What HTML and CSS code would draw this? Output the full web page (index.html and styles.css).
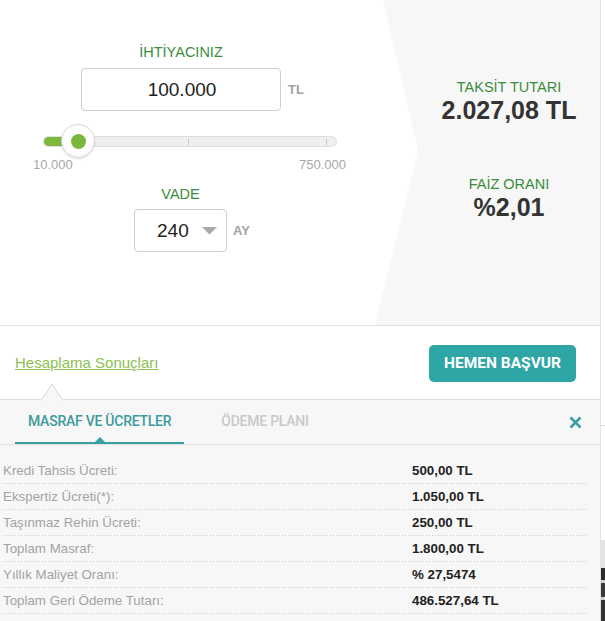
FILE: index.html
```html
<!DOCTYPE html>
<html lang="tr">
<head>
<meta charset="utf-8">
<title>Kredi Hesaplama</title>
<link rel="stylesheet" href="styles.css">
</head>
<body>
<div class="page">
  <div class="widget">
    <section class="calc">
      <div class="inputs">
        <div class="amount">
          <div class="field-label">İHTİYACINIZ</div>
          <div class="field-row">
            <div class="box amount-box">100.000</div>
            <span class="unit">TL</span>
          </div>
        </div>
        <div class="slider">
          <div class="track">
            <span class="fill"></span>
            <span class="tick tick-mid"></span>
            <span class="tick tick-end"></span>
          </div>
          <div class="knob"><span class="knob-dot"></span></div>
        </div>
        <div class="range"><span>10.000</span><span>750.000</span></div>
        <div class="term">
          <div class="field-label term-label">VADE</div>
          <div class="field-row term-row">
            <div class="box term-box">
              <span class="term-value">240</span>
              <svg class="caret" width="15" height="8" viewBox="0 0 15 8"><path d="M0 0 L15 0 L7.5 7.5 Z" fill="#a9a9a9"/></svg>
            </div>
            <span class="unit">AY</span>
          </div>
        </div>
      </div>
      <div class="results">
        <div class="result-label">TAKSİT TUTARI</div>
        <div class="result-value">2.027,08 TL</div>
        <div class="result-label second">FAİZ ORANI</div>
        <div class="result-value">%2,01</div>
      </div>
    </section>

    <section class="apply-bar">
      <a class="results-link" href="#">Hesaplama Sonuçları</a>
      <button class="apply-btn" type="button">HEMEN BAŞVUR</button>
    </section>

    <section class="details">
      <svg class="notch" width="24" height="18" viewBox="0 0 24 18"><path d="M1 17.5 L12 1 L23 17.5" fill="#f7f7f7" stroke="#d9d9d9" stroke-width="1"/><rect x="1.5" y="16.5" width="21" height="1.5" fill="#f7f7f7"/></svg>
      <div class="tabs">
        <div class="tab active">MASRAF VE ÜCRETLER</div>
        <div class="tab">ÖDEME PLANI</div>
        <svg class="close" width="13" height="13" viewBox="0 0 13 13"><path d="M1.5 1.5 L11.5 11.5 M11.5 1.5 L1.5 11.5" stroke="#3a9fa1" stroke-width="2.6" stroke-linecap="butt"/></svg>
      </div>
      <div class="rows">
        <div class="row"><span class="row-label">Kredi Tahsis Ücreti:</span><span class="row-value">500,00 TL</span></div>
        <div class="row"><span class="row-label">Ekspertiz Ücreti(*):</span><span class="row-value">1.050,00 TL</span></div>
        <div class="row"><span class="row-label">Taşınmaz Rehin Ücreti:</span><span class="row-value">250,00 TL</span></div>
        <div class="row"><span class="row-label">Toplam Masraf:</span><span class="row-value">1.800,00 TL</span></div>
        <div class="row"><span class="row-label">Yıllık Maliyet Oranı:</span><span class="row-value">% 27,5474</span></div>
        <div class="row"><span class="row-label">Toplam Geri Ödeme Tutarı:</span><span class="row-value">486.527,64 TL</span></div>
      </div>
    </section>
  </div>
  <div class="edge">
    <span class="edge-gap"></span>
    <span class="edge-line"></span>
    <span class="edge-gap2"></span>
    <span class="edge-light"></span>
    <span class="edge-dark"></span>
    <span class="edge-stripe"></span>
    <span class="edge-dark2"></span>
    <span class="edge-stripe"></span>
    <span class="edge-dark3"></span>
  </div>
</div>
</body>
</html>
```

FILE: styles.css
```css
html, body {
  margin: 0;
  padding: 0;
  background: #ffffff;
}

body {
  font-family: "Liberation Sans", Arial, sans-serif;
  color: #222;
  width: 605px;
  height: 621px;
  overflow: hidden;
}

.page {
  display: flex;
  align-items: stretch;
  min-height: 621px;
}

.widget {
  width: 600px;
  border-right: 1px solid #e2e2e2;
  display: flex;
  flex-direction: column;
}

/* ---------- top calculator ---------- */
.calc {
  display: flex;
  height: 325px;
  border-bottom: 1px solid #e2e2e2;
}

.inputs {
  width: 375px;
  padding-top: 44px;
  display: flex;
  flex-direction: column;
  align-items: flex-start;
}

.field-label {
  font-size: 14.5px;
  line-height: 17px;
  color: #3b8b3d;
  text-align: center;
}

.amount {
  margin-left: 81px;
}

.amount .field-label {
  width: 200px;
  margin-bottom: 7px;
}

.field-row {
  display: flex;
  align-items: center;
}

.box {
  box-sizing: border-box;
  height: 43px;
  border: 1px solid #cfcfcf;
  border-radius: 4px;
  background: #fff;
}

.amount-box {
  width: 200px;
  font-size: 19px;
  line-height: 41px;
  text-align: center;
  color: #222;
  padding-left: 2px;
}

.unit {
  font-size: 13px;
  font-weight: bold;
  color: #a3a3a3;
  margin-left: 7px;
}

.slider {
  position: relative;
  margin-left: 43px;
  margin-top: 13px;
  width: 294px;
  height: 34px;
}

.track {
  position: relative;
  box-sizing: border-box;
  margin-top: 12px;
  height: 11px;
  border: 1px solid #dedede;
  border-radius: 6px;
  background: #efefef;
  overflow: hidden;
}

.fill {
  position: absolute;
  left: 0;
  top: 0;
  bottom: 0;
  width: 36px;
  background: #7cb93c;
}

.tick {
  position: absolute;
  top: 2px;
  width: 1px;
  height: 6px;
  background: #c9c9c9;
}

.tick-mid { left: 144px; }
.tick-end { left: 282px; }

.knob {
  position: absolute;
  left: 18px;
  top: 0;
  box-sizing: border-box;
  width: 34px;
  height: 34px;
  border-radius: 50%;
  border: 1px solid #d6d6d6;
  background: radial-gradient(circle at 50% 40%, #ffffff 55%, #f0f0f0 100%);
  box-shadow: 0 1px 2px rgba(0, 0, 0, 0.12);
  display: flex;
  align-items: center;
  justify-content: center;
}

.knob-dot {
  width: 15px;
  height: 15px;
  border-radius: 50%;
  background: #7ab83a;
}

.range {
  margin-left: 33px;
  margin-top: -1px;
  width: 313px;
  display: flex;
  justify-content: space-between;
  font-size: 13px;
  line-height: 15px;
  color: #a8a8a8;
}

.term {
  margin-left: 134px;
  margin-top: 14px;
}

.term-label {
  width: 93px;
  margin-bottom: 6px;
}

.term-box {
  width: 93px;
  display: flex;
  align-items: center;
  padding-left: 22px;
}

.term-value {
  font-size: 19px;
  color: #222;
}

.caret {
  margin-left: 13px;
  margin-top: 1px;
}

.term-row .unit {
  margin-left: 6px;
}

.results {
  width: 225px;
  box-sizing: border-box;
  background: #f7f7f7;
  clip-path: polygon(8px 0, 43px 150px, 0 100%, 100% 100%, 100% 0);
  padding-left: 43px;
  padding-top: 79px;
  text-align: center;
}

.result-label {
  font-size: 14.5px;
  line-height: 17px;
  color: #3b8b3d;
}

.result-label.second {
  margin-top: 52px;
}

.result-value {
  font-size: 25px;
  line-height: 28px;
  font-weight: bold;
  color: #333;
}

/* ---------- apply bar ---------- */
.apply-bar {
  height: 73px;
  border-bottom: 1px solid #dcdcdc;
  display: flex;
  align-items: center;
  justify-content: space-between;
  padding: 0 24px 0 15px;
}

.results-link {
  font-size: 15px;
  color: #8cbf50;
  text-decoration: underline;
}

.apply-btn {
  width: 147px;
  height: 37px;
  border: 0;
  border-radius: 5px;
  background: #2fa6a6;
  color: #fff;
  font-family: Roboto, "Liberation Sans", sans-serif;
  font-weight: 700;
  font-size: 15.5px;
  padding: 0;
  margin-top: 1px;
}

/* ---------- details ---------- */
.details {
  position: relative;
  flex: 1;
  background: #f7f7f7;
}

.notch {
  position: absolute;
  left: 40px;
  top: -17px;
}

.tabs {
  display: flex;
  height: 44px;
  border-bottom: 1px solid #e0e0e0;
  padding-left: 15px;
}

.tab {
  position: relative;
  box-sizing: border-box;
  height: 44px;
  padding: 0 13px;
  line-height: 43px;
  border-bottom: 2px solid transparent;
  font-family: Roboto, "Liberation Sans", sans-serif;
  font-weight: 500;
  font-size: 14px;
  letter-spacing: -0.25px;
  color: #c9c9c9;
  margin-right: 24px;
}

.tab.active {
  color: #3d9a9d;
  border-bottom-color: #3aa0a2;
}

.tab.active::after {
  content: "";
  position: absolute;
  left: 50%;
  bottom: 0;
  margin-left: -5px;
  border-left: 5px solid transparent;
  border-right: 5px solid transparent;
  border-bottom: 5px solid #3aa0a2;
}

.close {
  margin-left: auto;
  margin-right: 18px;
  align-self: center;
  margin-top: 1px;
}

.rows {
  padding: 13px 13px 10px 3px;
}

.row {
  display: grid;
  grid-template-columns: 409px 1fr;
  height: 26px;
  line-height: 25px;
  font-size: 13.33px;
  background-image: linear-gradient(to right, #c9c9c9 1px, transparent 1px);
  background-size: 3px 1px;
  background-repeat: repeat-x;
  background-position: left bottom;
}

.row-label {
  color: #a3a3a3;
}

.row-value {
  font-weight: bold;
  color: #222;
}

/* ---------- right edge of the page ---------- */
.edge {
  width: 4px;
  display: flex;
  flex-direction: column;
}

.edge-gap { height: 425px; }
.edge-line { height: 1px; background: #dcdcdc; }
.edge-gap2 { height: 114px; }
.edge-light { height: 28px; background: #e4e4e4; }
.edge-dark { height: 12px; background: #2b2b2b; }
.edge-stripe { height: 3px; background: #d0d0d0; }
.edge-dark2 { height: 14px; background: #3a3a3a; }
.edge-dark3 { flex: 1; background: #333; }
```
